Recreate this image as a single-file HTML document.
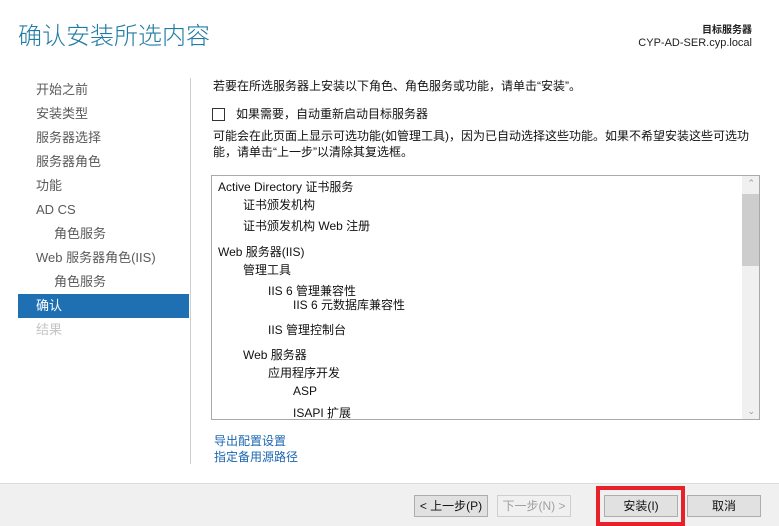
<!DOCTYPE html>
<html><head><meta charset="utf-8"><style>
*{margin:0;padding:0;box-sizing:border-box}
body{width:779px;height:526px;background:#fff;position:relative;overflow:hidden;font-family:"Liberation Sans","Noto Sans CJK SC",sans-serif;font-size:12px;color:#1e1e1e}
.a{position:absolute;white-space:nowrap;line-height:1}
.nav{position:absolute;left:36px;font-size:13px;color:#5a5a5a;line-height:1}
.t{position:absolute;font-size:12px;line-height:1;white-space:nowrap;color:#111}
.btn{position:absolute;top:495px;width:74px;height:22px;border:1px solid #adadad;background:#e1e1e1;font-size:12px;text-align:center;line-height:20px;color:#111}
</style></head><body>
<div class="a" style="left:18px;top:25px;font-size:24px;color:#1f7ba4;font-weight:300">确认安装所选内容</div>
<div class="a" style="right:27px;top:26px;font-size:10px;font-weight:bold">目标服务器</div>
<div class="a" style="right:27px;top:38px;font-size:11px">CYP-AD-SER.cyp.local</div>

<div class="nav" style="top:83px">开始之前</div>
<div class="nav" style="top:107px">安装类型</div>
<div class="nav" style="top:131px">服务器选择</div>
<div class="nav" style="top:155px">服务器角色</div>
<div class="nav" style="top:179px">功能</div>
<div class="nav" style="top:203px">AD CS</div>
<div class="nav" style="top:227px;left:54px">角色服务</div>
<div class="nav" style="top:251px">Web 服务器角色(IIS)</div>
<div class="nav" style="top:275px;left:54px">角色服务</div>
<div style="position:absolute;left:18px;top:294px;width:171px;height:24px;background:#1e70b3"></div>
<div class="nav" style="top:299px;color:#fff">确认</div>
<div class="nav" style="top:323px;color:#c4c4c4">结果</div>

<div style="position:absolute;left:190px;top:78px;width:1px;height:386px;background:#cfcfcf"></div>

<div class="t" style="left:213px;top:80px">若要在所选服务器上安装以下角色、角色服务或功能，请单击“安装”。</div>
<div style="position:absolute;left:212px;top:108px;width:13px;height:13px;border:1px solid #333;background:#fff"></div>
<div class="t" style="left:236px;top:108px">如果需要，自动重新启动目标服务器</div>
<div class="t" style="left:213px;top:130px">可能会在此页面上显示可选功能(如管理工具)，因为已自动选择这些功能。如果不希望安装这些可选功</div>
<div class="t" style="left:213px;top:146px">能，请单击“上一步”以清除其复选框。</div>

<div style="position:absolute;left:211px;top:175px;width:549px;height:245px;border:1px solid #a9a9a9;overflow:hidden">
 <div style="position:absolute;right:0;top:0;width:17px;height:243px;background:#f0f0f0"></div>
 <div style="position:absolute;right:0;top:18px;width:17px;height:72px;background:#cdcdcd"></div>
 <div class="a" style="right:4px;top:3px;font-size:9px;color:#999">&#8963;</div>
 <div class="a" style="right:4px;top:231px;font-size:9px;color:#999">&#8964;</div>
 <div class="t" style="left:6px;top:5px">Active Directory 证书服务</div>
 <div class="t" style="left:31px;top:23px">证书颁发机构</div>
 <div class="t" style="left:31px;top:44px">证书颁发机构 Web 注册</div>
 <div class="t" style="left:6px;top:70px">Web 服务器(IIS)</div>
 <div class="t" style="left:31px;top:88px">管理工具</div>
 <div class="t" style="left:56px;top:109px">IIS 6 管理兼容性</div>
 <div class="t" style="left:81px;top:123px">IIS 6 元数据库兼容性</div>
 <div class="t" style="left:56px;top:148px">IIS 管理控制台</div>
 <div class="t" style="left:31px;top:173px">Web 服务器</div>
 <div class="t" style="left:56px;top:191px">应用程序开发</div>
 <div class="t" style="left:81px;top:209px">ASP</div>
 <div class="t" style="left:81px;top:231px">ISAPI 扩展</div>
</div>

<div class="t" style="left:214px;top:435px;color:#1a66b0">导出配置设置</div>
<div class="t" style="left:214px;top:451px;color:#1a66b0">指定备用源路径</div>

<div style="position:absolute;left:0;top:483px;width:779px;height:43px;background:#f0f0f0;border-top:1px solid #dcdcdc"></div>
<div class="btn" style="left:414px">&lt; 上一步(P)</div>
<div class="btn" style="left:497px;color:#a0a0a0;border-color:#cfcfcf;background:#f0f0f0">下一步(N) &gt;</div>
<div style="position:absolute;left:596px;top:486px;width:89px;height:40px;border:4px solid #e8202a"></div>
<div class="btn" style="left:604px">安装(I)</div>
<div class="btn" style="left:687px">取消</div>
</body></html>
